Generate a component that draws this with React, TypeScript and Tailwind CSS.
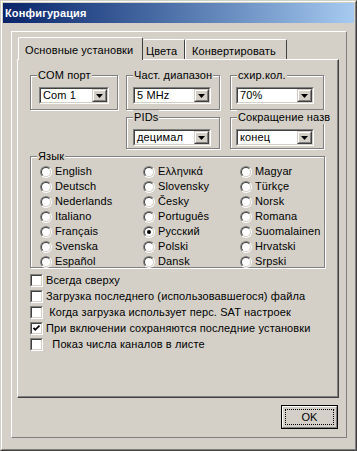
import type { ReactNode } from "react";

const raised = "border border-t-white border-l-white border-r-[#808080] border-b-[#808080]";

function Combo({ text, w }: { text: string; w: string }) {
  return (
    <div className={`flex h-[17px] border border-t-[#808080] border-l-[#808080] border-r-white border-b-white ${w}`}>
      <div className="flex flex-1 border border-t-[#404040] border-l-[#404040] border-r-[#d4d0c8] border-b-[#d4d0c8] bg-white">
        <span className="flex-1 pl-[2px] leading-[13px] text-black">{text}</span>
        <div className="flex w-[15px] items-center justify-center border border-t-[#d4d0c8] border-l-[#d4d0c8] border-r-[#404040] border-b-[#404040] bg-[#d4d0c8]">
          <div className="flex h-full w-full items-center justify-center border border-t-white border-l-white border-r-[#808080] border-b-[#808080]">
            <svg width="7" height="4" viewBox="0 0 7 4">
              <polygon points="0,0 7,0 3.5,4" fill="#000" />
            </svg>
          </div>
        </div>
      </div>
    </div>
  );
}

function Group({ label, className, children }: { label: string; className: string; children?: ReactNode }) {
  return (
    <div className={`relative border border-[#808080] shadow-[inset_1px_1px_0_#fff,1px_1px_0_#fff] ${className}`}>
      <span className="absolute -top-[8px] left-[6px] bg-[#d4d0c8] px-[1px] leading-[14px] whitespace-nowrap">{label}</span>
      {children}
    </div>
  );
}

function Radio({ label, on }: { label: string; on?: boolean }) {
  return (
    <div className="flex h-[15px] items-center gap-[3px] whitespace-nowrap">
      <div className="h-[12px] w-[12px] shrink-0 rounded-full border border-t-[#808080] border-l-[#808080] border-r-white border-b-white">
        <div className="flex h-full w-full items-center justify-center rounded-full border border-t-[#404040] border-l-[#404040] border-r-[#d4d0c8] border-b-[#d4d0c8] bg-white">
          {on && <div className="h-[4px] w-[4px] rounded-full bg-black" />}
        </div>
      </div>
      <span>{label}</span>
    </div>
  );
}

function Check({ label, on }: { label: string; on?: boolean }) {
  return (
    <div className="flex h-[13px] items-center gap-[3px] whitespace-pre">
      <div className="h-[13px] w-[13px] shrink-0 border border-t-[#808080] border-l-[#808080] border-r-white border-b-white">
        <div className="flex h-full w-full items-center justify-center border border-t-[#404040] border-l-[#404040] border-r-[#d4d0c8] border-b-[#d4d0c8] bg-white">
          {on && (
            <svg width="9" height="9" viewBox="0 0 9 9">
              <polyline points="1.5,3.8 3.3,5.8 7.5,1.6" fill="none" stroke="#000" strokeWidth="1.8" />
            </svg>
          )}
        </div>
      </div>
      <span>{label}</span>
    </div>
  );
}

const langs: [string, boolean?][] = [
  ["English"], ["Ελληνικά"], ["Magyar"],
  ["Deutsch"], ["Slovensky"], ["Türkçe"],
  ["Nederlands"], ["Česky"], ["Norsk"],
  ["Italiano"], ["Português"], ["Romana"],
  ["Français"], ["Русский", true], ["Suomalainen"],
  ["Svenska"], ["Polski"], ["Hrvatski"],
  ["Español"], ["Dansk"], ["Srpski"],
];

export default function App() {
  return (
    <div className="h-[451px] w-[357px] border border-t-[#d4d0c8] border-l-[#d4d0c8] border-r-[#404040] border-b-[#404040] bg-[#d4d0c8] text-[11px] text-black [font-family:'Liberation_Sans',Arial,sans-serif]">
      <div className={`flex h-full flex-col p-[1px] ${raised}`}>
        {/* Title bar */}
        <div className="flex h-[20px] shrink-0 items-center bg-gradient-to-r from-[#0a246a] to-[#a6caf0] pl-[2px] font-bold tracking-[0.15px] text-white">
          Конфигурация
        </div>

        {/* Outer frame */}
        <div className={`ml-[8px] mt-[8px] flex h-[407px] w-[336px] flex-col tracking-[0.12px] ${raised}`}>
          <div className="ml-[5px] mt-[5px] flex flex-col">
            {/* Tabs */}
            <div className="relative z-10 flex h-[22px] items-end pl-[1px]">
              <div className="-mb-[1px] flex h-[23px] w-[125px] items-start rounded-t-[2px] border border-b-0 border-t-white border-l-white border-r-[#404040] bg-[#d4d0c8] pl-[6px] pt-[4px]">
                Основные установки
              </div>
              <div className="flex h-[20px] w-[42px] items-start rounded-t-[2px] border border-b-0 border-t-white border-l-0 border-r-[#404040] pl-[3px] pt-[3px]">
                Цвета
              </div>
              <div className="flex h-[20px] w-[102px] items-start rounded-t-[2px] border border-b-0 border-t-white border-l-white border-r-[#404040] pl-[6px] pt-[3px]">
                Конвертировать
              </div>
            </div>

            {/* Pane */}
            <div className="h-[339px] w-[322px] border border-t-white border-l-white border-r-[#404040] border-b-[#404040] shadow-[inset_-1px_-1px_0_#808080] pl-[12px] pt-[15px]">
              <div className="flex">
                <Group label="COM порт" className="h-[35px] w-[88px] pl-[8px] pt-[11px]">
                  <Combo text="Com 1" w="w-[70px]" />
                </Group>
                <div className="ml-[8px] grid grid-cols-[94px_94px] gap-x-[10px] gap-y-[7px]">
                  <Group label="Част. диапазон" className="h-[35px] pl-[6px] pt-[11px]">
                    <Combo text="5 MHz" w="w-[78px]" />
                  </Group>
                  <Group label="схир.кол." className="h-[35px] pl-[5px] pt-[11px]">
                    <Combo text="70%" w="w-[78px]" />
                  </Group>
                  <Group label="PIDs" className="h-[32px] pl-[6px] pt-[11px]">
                    <Combo text="децимал" w="w-[78px]" />
                  </Group>
                  <Group label="Сокращение назв" className="h-[32px] pl-[5px] pt-[11px]">
                    <Combo text="конец" w="w-[78px]" />
                  </Group>
                </div>
              </div>

              <Group label="Язык" className="mt-[7px] h-[112px] w-[295px] pl-[9px] pt-[7px]">
                <div className="grid grid-cols-[103px_97px_1fr]">
                  {langs.map(([l, on]) => (
                    <Radio key={l} label={l} on={on} />
                  ))}
                </div>
              </Group>

              <div className="mt-[6px] flex flex-col gap-[3px]">
                <Check label="Всегда сверху" />
                <Check label="Загрузка последнего (использовавшегося) файла" />
                <Check label=" Когда загрузка использует перс. SAT настроек" />
                <Check label="При включении сохраняются последние установки" on />
                <Check label="  Показ числа каналов в листе" />
              </div>
            </div>

            {/* OK */}
            <div className="ml-[264px] mt-[7px] h-[24px] w-[57px] border border-black">
              <div className="flex h-full w-full items-center justify-center border border-t-white border-l-white border-r-[#808080] border-b-[#808080] p-[2px]">
                <div className="flex h-full w-full items-center justify-center border border-dotted border-black">OK</div>
              </div>
            </div>
          </div>
        </div>
      </div>
    </div>
  );
}
